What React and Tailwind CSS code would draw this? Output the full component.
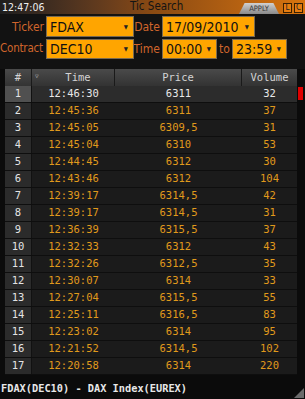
import React from 'react'

const rows = [
    ['12:46:30', '6311', '32'],
    ['12:45:36', '6311', '37'],
    ['12:45:05', '6309,5', '31'],
    ['12:45:04', '6310', '53'],
    ['12:44:45', '6312', '30'],
    ['12:43:46', '6312', '104'],
    ['12:39:17', '6314,5', '42'],
    ['12:39:17', '6314,5', '31'],
    ['12:36:39', '6315,5', '37'],
    ['12:32:33', '6312', '43'],
    ['12:32:26', '6312,5', '35'],
    ['12:30:07', '6314', '33'],
    ['12:27:04', '6315,5', '55'],
    ['12:25:11', '6316,5', '83'],
    ['12:23:02', '6314', '95'],
    ['12:21:52', '6314,5', '102'],
    ['12:20:58', '6314', '220'],
]

const cond = { fontFamily: '"DejaVu Sans Condensed", "DejaVu Sans", sans-serif', fontStretch: 'condensed' }
const mono = { fontFamily: '"DejaVu Sans Mono", monospace' }

function Drop({ value, w }) {
    return (
        <div className={`${w} h-full bg-[#ffa500] border border-[#7a6a50] flex items-center justify-between pl-[3px] pr-[5px]`}>
            <span className='text-[14px] text-[#111] leading-none whitespace-nowrap'>{value}</span>
            <span className='text-[6px] text-[#222] leading-none'>▼</span>
        </div>
    )
}

function Label({ text, w }) {
    return <span className={`${w} shrink-0 flex justify-end whitespace-nowrap text-[12px] text-[#d0652c]`}>{text}</span>
}

function App() {
    return (
        <div className='w-[305px] h-[399px] bg-[#0b0b0b] flex flex-col overflow-hidden' style={cond}>
            {/* title */}
            <div className='h-[14px] flex items-center relative bg-gradient-to-r from-[#1e1e1e] via-[#8a4a12] to-[#d8740e]'>
                <span className='pl-[2px] text-[10.5px] text-[#eee] leading-none'>12:47:06</span>
                <span className='absolute left-[130px] top-[1px] text-[11.5px] text-[#141414] leading-none'>Tic Search</span>
                <div className='ml-auto flex items-end h-full gap-[2px] pr-[2px]'>
                    <div className='h-[11px] w-[40px] bg-gradient-to-b from-[#d0d0d0] to-[#8a8a8a] flex items-center justify-center text-[7.5px] text-[#333] leading-none mr-[2px]' style={{ clipPath: 'polygon(14% 0, 86% 0, 100% 100%, 0 100%)' }}>APPLY</div>
                    <div className='mb-[1px] h-[10px] w-[9px] bg-[#e67c10] border border-[#3a2000] flex items-center justify-center text-[8px] text-[#222] leading-none'>L</div>
                    <div className='mb-[1px] h-[10px] w-[9px] bg-[#e67c10] border border-[#3a2000] flex items-center justify-center text-[8px] text-[#222] leading-none'>C</div>
                </div>
            </div>

            {/* form */}
            <div className='bg-[#121212] pt-[2px] pb-[10px] flex flex-col gap-[2px]'>
                <div className='flex items-center h-[21px]'>
                    <Label text='Ticker' w='w-[45px] pr-[1px]' />
                    <Drop value='FDAX' w='w-[88px] ml-[1px]' />
                    <Label text='Date' w='w-[27px] pr-[1px]' />
                    <Drop value='17/09/2010' w='w-[93px] ml-[1px]' />
                </div>
                <div className='flex items-center h-[20px]'>
                    <span className='w-[46px] shrink-0 whitespace-nowrap text-[11.5px] tracking-[-0.2px] text-[#d0652c]'>Contract</span>
                    <Drop value='DEC10' w='w-[88px]' />
                    <Label text='Time' w='w-[27px] pr-[1px]' />
                    <Drop value='00:00' w='w-[55px] ml-[1px]' />
                    <span className='w-[15px] text-center text-[12px] text-[#d0652c]'>to</span>
                    <Drop value='23:59' w='w-[55px]' />
                </div>
            </div>

            {/* table */}
            <div className='pl-[5px] flex flex-col' style={mono}>
                <div className='grid grid-cols-[27px_83px_127px_55px] h-[17px] text-[10.5px] text-[#d4d4d4]'>
                    <div className='bg-gradient-to-b from-[#4a4a4a] to-[#333] border-r border-[#1a1a1a] flex items-center justify-center'>#</div>
                    <div className='relative bg-gradient-to-b from-[#4a4a4a] to-[#333] border-r border-[#1a1a1a] flex items-center justify-center pl-[10px]'>
                        <span className='absolute left-[3px] top-[2px] text-[6px] text-[#aaa]'>▽</span>
                        Time
                    </div>
                    <div className='bg-gradient-to-b from-[#4a4a4a] to-[#333] border-r border-[#1a1a1a] flex items-center justify-center'>Price</div>
                    <div className='bg-gradient-to-b from-[#4a4a4a] to-[#333] flex items-center justify-center'>Volume</div>
                </div>
                {rows.map((r, i) => (
                    <div key={i} className='flex'>
                        <div className={`grid grid-cols-[27px_83px_127px_55px] h-[17px] text-[10.5px] border-b border-[#0e0e0e] ${i === 0 ? 'bg-[#2c2c2c] text-[#e8e8e8]' : 'bg-[#1b1b1b] text-[#e09a1c]'}`}>
                            <div className={`flex items-center justify-center border-r border-[#111] text-[#e4e4e4] ${i === 0 ? 'bg-[#505050]' : 'bg-[#2b2b2b]'}`}>{i + 1}</div>
                            <div className='flex items-center justify-center'>{r[0]}</div>
                            <div className='flex items-center justify-center'>{r[1]}</div>
                            <div className='flex items-center justify-center'>{r[2]}</div>
                        </div>
                        {i === 0 && <div className='ml-[1px] mt-[1px] w-[5px] h-[13px] bg-[#e00000]' />}
                    </div>
                ))}
            </div>

            {/* footer */}
            <div className='mt-auto h-[20px] flex items-center relative' style={mono}>
                <span className='pl-[1px] text-[10.3px] font-bold text-[#e8e8e8]'>FDAX(DEC10) - DAX Index(EUREX)</span>
                <svg className='absolute right-[1px] bottom-[1px]' width='10' height='10' viewBox='0 0 10 10'>
                    <polygon points='10,0 10,10 0,10' fill='#6a6a6a' />
                </svg>
            </div>
        </div>
    )
}

export default App
